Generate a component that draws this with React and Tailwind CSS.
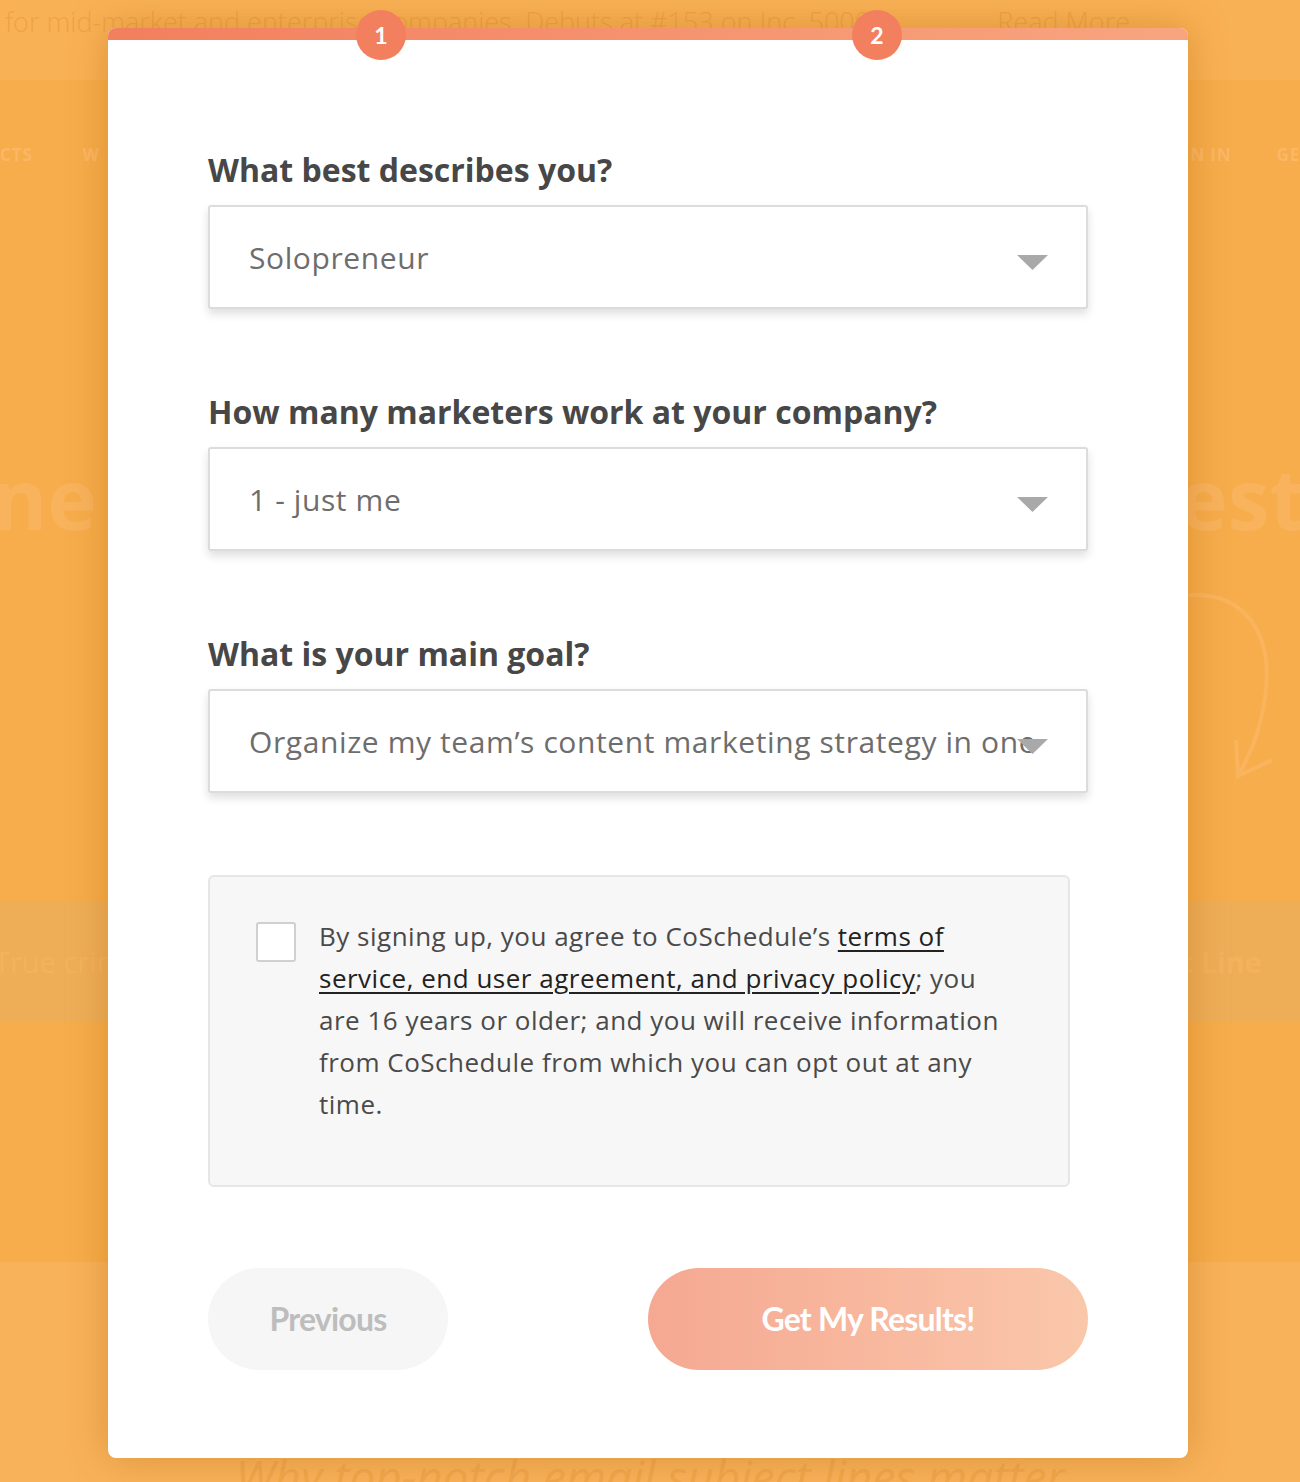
import React from "react";

const FONT = { fontFamily: "'Open Sans', 'Noto Sans', sans-serif" };
const BTN_FONT = { fontFamily: "Lato, 'Open Sans', sans-serif" };

function Caret() {
  return (
    <svg width="31" height="15" viewBox="0 0 31 15" className="shrink-0">
      <path d="M0 0 L31 0 L15.5 15 Z" fill="#a9a9a9" />
    </svg>
  );
}

function SelectBox({ value }) {
  return (
    <div className="relative flex h-[104px] w-[880px] items-center rounded-[3px] border-2 border-[#dcdcdc] bg-white pl-[39px] pr-[40px] shadow-[0_5px_10px_rgba(0,0,0,0.13)]">
      <div className="min-w-0 flex-1 overflow-hidden whitespace-nowrap text-[30px] tracking-[0.6px] text-[#6d6d6d]">
        {value}
      </div>
      <div className="absolute right-[38px] top-[48px]">
        <Caret />
      </div>
    </div>
  );
}

function Field({ label, value }) {
  return (
    <div className="flex flex-col">
      <div className="mb-[15px] text-[32px] font-bold leading-[40px] text-[#474747]">{label}</div>
      <SelectBox value={value} />
    </div>
  );
}

function StepDot({ n, left }) {
  return (
    <div
      style={BTN_FONT}
      className={`absolute top-[-18px] flex h-[50px] w-[50px] items-center justify-center rounded-full bg-[#f27f5e] text-[23px] font-bold text-white ${left}`}
    >
      {n}
    </div>
  );
}

export default function App() {
  return (
    <div className="relative h-[1482px] w-full overflow-hidden bg-[#f7ad4b]" style={FONT}>
      {/* page behind the modal */}
      <div className="flex h-[80px] items-start justify-between bg-[#f9b155] pl-[5px] pr-[170px] pt-[2px] text-[27px] font-light text-[#eea344]">
        <span>for mid-market and enterprise companies. Debuts at #153 on Inc. 5000.</span>
        <span>Read More</span>
      </div>
      <div className="flex h-[150px] items-center justify-between text-[17px] font-bold tracking-wider text-[#fbb765]">
        <div className="flex gap-[50px]">
          <span>CTS</span>
          <span>W</span>
        </div>
        <div className="flex gap-[45px]">
          <span>N IN</span>
          <span>GE</span>
        </div>
      </div>
      <div className="flex h-[370px] items-start justify-between pt-[210px] text-[84px] font-bold leading-[115px] text-[#f9b35d]">
        <span className="ml-[-8px]">ne</span>
        <span className="mr-[-6px]">est</span>
      </div>
      <div className="flex h-[302px] justify-end pr-[20px]">
        <svg width="100" height="210" viewBox="0 0 100 210" className="mt-[-12px]">
          <path d="M0 8 C60 0 95 40 85 110 C80 145 70 165 60 185" fill="none" stroke="#f9b45d" strokeWidth="4" />
          <path d="M56 152 L58 188 L92 172" fill="none" stroke="#f9b45d" strokeWidth="4" />
        </svg>
      </div>
      <div className="flex h-[120px] items-center justify-between bg-[#eeae58] text-[29px] text-[#f4b25d]">
        <span className="ml-[-6px]">True crime</span>
        <span className="mr-[38px] font-bold">Content Line</span>
      </div>
      <div className="h-[240px]" />
      <div className="h-[220px] bg-[#f8b259] pt-[180px] text-center text-[46px] italic text-[#f0a74c]">
        Why top-notch email subject lines matter
      </div>

      {/* modal */}
      <div className="absolute left-[108px] top-[28px] w-[1080px] rounded-[8px] bg-white shadow-[0_0_40px_rgba(170,90,0,0.35)]">
        <div className="relative h-[12px] rounded-t-[8px] bg-gradient-to-r from-[#f27f5e] to-[#f8a57f]">
          <StepDot n="1" left="left-[248px]" />
          <StepDot n="2" left="left-[744px]" />
        </div>

        <div className="flex flex-col pb-[88px] pl-[100px] pt-[110px]">
          <div className="flex flex-col gap-[83px]">
            <Field label="What best describes you?" value="Solopreneur" />
            <Field label="How many marketers work at your company?" value="1 - just me" />
            <Field
              label="What is your main goal?"
              value="Organize my team’s content marketing strategy in one place"
            />
          </div>

          <div className="mt-[82px] flex h-[312px] w-[862px] gap-[23px] rounded-[6px] border-2 border-[#e6e6e6] bg-[#f7f7f7] pl-[46px] pt-[38px]">
            <div className="mt-[7px] h-[40px] w-[40px] shrink-0 rounded-[3px] border-2 border-[#d0d0d0] bg-white" />
            <p className="w-[695px] text-[26px] leading-[42px] tracking-[0.5px] text-[#4a4a4a]">
              By signing up, you agree to CoSchedule’s{" "}
              <span className="text-[#222] underline underline-offset-4">
                terms of service, end user agreement, and privacy policy
              </span>
              ; you are 16 years or older; and you will receive information from CoSchedule from
              which you can opt out at any time.
            </p>
          </div>

          <div className="mt-[81px] flex w-[880px] justify-between" style={BTN_FONT}>
            <button className="flex h-[102px] w-[240px] items-center justify-center rounded-full bg-[#f6f6f6] text-[32px] font-bold tracking-tight text-[#bdbdbd]">
              Previous
            </button>
            <button className="flex h-[102px] w-[440px] items-center justify-center rounded-full bg-gradient-to-r from-[#f5a892] to-[#fac7aa] text-[32px] font-bold tracking-tight text-white">
              Get My Results!
            </button>
          </div>
        </div>
      </div>
    </div>
  );
}
